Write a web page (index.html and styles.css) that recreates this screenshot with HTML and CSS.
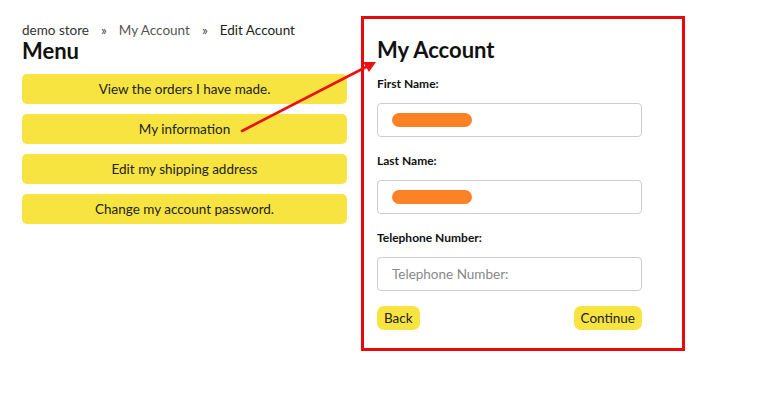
FILE: index.html
```html
<!DOCTYPE html>
<html>
<head>
<meta charset="utf-8">
<link rel="stylesheet" href="styles.css">
</head>
<body>
<div class="page">
  <div class="left">
    <div class="crumbs"><span class="c1">demo store</span><span class="sep">»</span><span class="c2">My Account</span><span class="sep">»</span><span class="c3">Edit Account</span></div>
    <h2 class="menu-title">Menu</h2>
    <div class="menu">
      <a class="menu-btn">View the orders I have made.</a>
      <a class="menu-btn">My information</a>
      <a class="menu-btn">Edit my shipping address</a>
      <a class="menu-btn">Change my account password.</a>
    </div>
  </div>
  <div class="box">
    <h2 class="box-title">My Account</h2>
    <label class="lbl first">First Name:</label>
    <div class="field"><span class="blob"></span></div>
    <label class="lbl">Last Name:</label>
    <div class="field"><span class="blob"></span></div>
    <label class="lbl">Telephone Number:</label>
    <div class="field"><span class="ph">Telephone Number:</span></div>
    <div class="actions">
      <a class="small-btn">Back</a>
      <a class="small-btn">Continue</a>
    </div>
  </div>
  <svg class="arrow" width="777" height="417" viewBox="0 0 777 417">
    <line x1="242" y1="131" x2="368" y2="66" stroke="#ec1111" stroke-width="2.6" stroke-linecap="round"/>
    <polygon points="376,62 363,62 369,72" fill="#ec1111"/>
  </svg>
</div>
</body>
</html>
```
FILE: styles.css
```css
* { box-sizing: border-box; }
html, body { margin: 0; padding: 0; background: #fff; }
body { font-family: "Lato", "Noto Sans", sans-serif; color: #222; }
.page { position: relative; width: 777px; height: 417px; display: flex; align-items: flex-start; padding: 16px 0 0 22px; }
.left { width: 325px; padding-top: 6px; }
.crumbs { font-size: 13.5px; line-height: 17px; color: #333; }
.crumbs .c2 { color: #555; }
.crumbs .c3 { color: #222; }
.crumbs .sep { margin: 0 12px; color: #444; }
.menu-title { margin: 0; font-size: 22px; line-height: 24px; font-weight: 700; color: #111; }
.menu { margin-top: 11px; display: flex; flex-direction: column; gap: 10px; }
.menu-btn { display: block; height: 30px; line-height: 30px; text-align: center; background: #f8e441; border-radius: 5px; font-size: 13.5px; color: #222; }
.box { margin-left: 14px; width: 324px; height: 335px; border: 3px solid #e8090d; padding: 17px 13px 0 13px; }
.box-title { margin: 0; font-size: 22px; line-height: 28px; font-weight: 700; color: #111; }
.lbl { display: block; font-size: 12px; font-weight: 700; line-height: 16px; color: #111; margin-top: 0; }
.lbl.first { margin-top: 12px; }
.field { margin-top: 11px; width: 265px; height: 34px; border: 1px solid #ccc; border-radius: 4px; display: flex; align-items: center; padding-left: 14px; margin-bottom: 16px; }
.blob { display: block; width: 80px; height: 14px; border-radius: 7px; background: #fd8127; }
.ph { font-size: 13.5px; color: #888; }
.actions { width: 265px; display: flex; justify-content: space-between; margin-top: -1px; }
.small-btn { display: block; height: 24px; line-height: 24px; padding: 0 7px; background: #f8e441; border-radius: 7px; font-size: 13.5px; color: #222; }
.arrow { position: absolute; left: 0; top: 0; pointer-events: none; }
```
